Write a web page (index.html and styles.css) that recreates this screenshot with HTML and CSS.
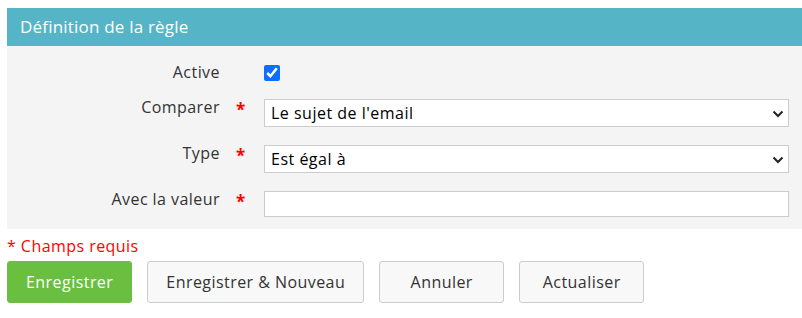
FILE: index.html
```html
<!DOCTYPE html>
<html lang="fr">
<head>
    <meta charset="UTF-8">
    <title>Définition de la règle</title>
    <link rel="stylesheet" href="styles.css">
</head>
<body>
    <div class="panel">
        <div class="panel-head">Définition de la règle</div>
        <div class="panel-body">
            <label class="lbl" for="active">Active</label>
            <span class="req"></span>
            <div class="ctrl"><input type="checkbox" id="active" class="check" checked></div>

            <label class="lbl" for="comparer">Comparer</label>
            <span class="req">*</span>
            <div class="ctrl select-wrap">
                <select id="comparer" class="field">
                    <option>Le sujet de l'email</option>
                </select>
                <svg class="chev" width="12" height="8" viewBox="0 0 12 8"><path d="M1.5 1.5 L6 6 L10.5 1.5" fill="none" stroke="#222" stroke-width="2"/></svg>
            </div>

            <label class="lbl" for="type">Type</label>
            <span class="req">*</span>
            <div class="ctrl select-wrap">
                <select id="type" class="field">
                    <option>Est égal à</option>
                </select>
                <svg class="chev" width="12" height="8" viewBox="0 0 12 8"><path d="M1.5 1.5 L6 6 L10.5 1.5" fill="none" stroke="#222" stroke-width="2"/></svg>
            </div>

            <label class="lbl" for="valeur">Avec la valeur</label>
            <span class="req">*</span>
            <div class="ctrl"><input type="text" id="valeur" class="field text"></div>
        </div>
    </div>

    <div class="required">* Champs requis</div>

    <div class="actions">
        <button class="btn btn-green">Enregistrer</button>
        <button class="btn">Enregistrer &amp; Nouveau</button>
        <button class="btn">Annuler</button>
        <button class="btn">Actualiser</button>
    </div>
</body>
</html>
```

FILE: styles.css
```css
body {
    margin: 0;
    padding: 8px 0 0 7px;
    font-family: "Open Sans", sans-serif;
    color: #333;
    background: #fff;
    letter-spacing: 0.45px;
}

.panel-head {
    background-color: #56b4c7; /* teal header */
    color: #fff;
    font-size: 17px;
    letter-spacing: 0.2px;
    height: 38px;
    line-height: 38px;
    padding-left: 13px;
}

.panel-body {
    background-color: #f4f4f4;
    padding: 18px 13px 12px 0;
    display: grid;
    grid-template-columns: 213px 44px 1fr;
    grid-template-rows: 17px 28px 28px 26px;
    row-gap: 18px;
}

.lbl {
    align-self: start;
    text-align: right;
    font-size: 16px;
    line-height: 20px;
    margin-top: -2px;
    color: #333;
}

.req {
    align-self: start;
    color: #f00;
    padding-left: 16px;
    font-size: 17px;
    font-weight: bold;
    line-height: 20px;
    margin-top: 1px;
}

.ctrl {
    display: flex;
    align-items: center;
}

.check {
    margin: 1px 0 0 0;
    width: 16px;
    height: 16px;
    accent-color: #0d6efd;
}

.select-wrap {
    position: relative;
}

.field {
    width: 100%;
    height: 28px;
    border: 1px solid #ccc;
    background: #fff;
    font-family: "Open Sans", sans-serif;
    font-size: 16px;
    letter-spacing: 0.5px;
    color: #000;
    padding: 0 6px;
    margin: 0;
    box-sizing: border-box;
    appearance: none;
    border-radius: 0;
}

.field.text {
    height: 26px;
}

.chev {
    position: absolute;
    right: 5px;
    top: 11px;
}

.required {
    color: #f00;
    font-size: 16px;
    line-height: 22px;
    margin-top: 6px;
}

.actions {
    display: flex;
    gap: 15px;
    margin-top: 4px;
}

.btn {
    min-width: 125px;
    height: 42px;
    padding: 0 18px;
    font-family: "Open Sans", sans-serif;
    font-size: 16px;
    letter-spacing: 0.45px;
    color: #333;
    background-color: #f8f8f8;
    border: 1px solid #ccc;
    border-radius: 3px;
}

.btn-green {
    background-color: #6abf40;
    border-color: #6abf40;
    color: #fff;
}
```
